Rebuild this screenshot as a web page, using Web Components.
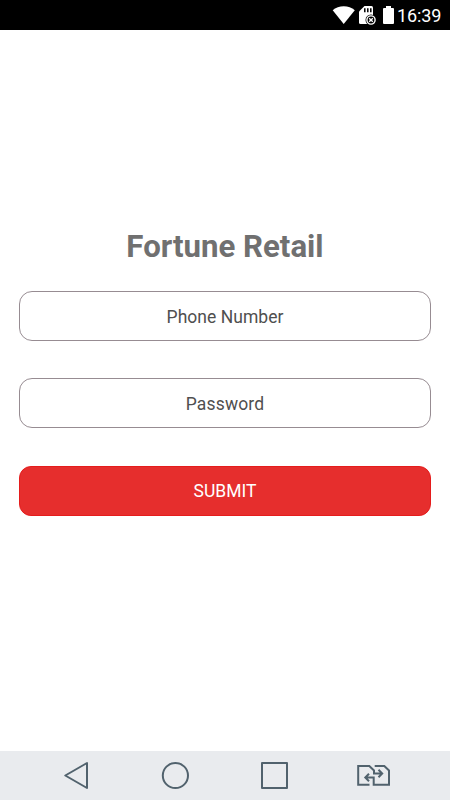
<!DOCTYPE html>
<html lang="en">
<head>
<meta charset="utf-8">
<title>Fortune Retail</title>
<style>html,body{margin:0;height:100%;background:#fff;overflow:hidden}</style>
</head>
<body>
<login-screen></login-screen>
<script>
const define = (name, html) => customElements.define(name, class extends HTMLElement {
  constructor() {
    super();
    const t = document.createElement('template');
    t.innerHTML = html;
    this.attachShadow({ mode: 'open' }).append(t.content.cloneNode(true));
  }
});

define('status-bar', `
<style>
:host{display:flex;box-sizing:border-box;height:30px;background:#000;color:#fff;justify-content:flex-end;padding-right:9px}
svg{display:block;flex:none}
.time{font-size:18px;line-height:31px;letter-spacing:-.1px;width:44px;white-space:nowrap}
</style>
<svg width="65" height="30" viewBox="332 0 65 30">
  <path fill="#fff" d="M332.7 10.3C338.5 5 349 5 354.8 10.3L343.7 24Z"/>
  <path fill="#fff" d="M364.5 6H371.5Q373 6 373 7.5V24H360.5Q359 24 359 22.5V11.5Z"/>
  <path stroke="#000" stroke-width="1.5" d="M364.8 8.2V12.2M367.8 8.2V12.2M370.8 8.2V12.2"/>
  <circle cx="371" cy="20" r="5.5" fill="#000"/>
  <circle cx="371" cy="20" r="4.1" fill="none" stroke="#fff" stroke-width="1.4"/>
  <path stroke="#fff" stroke-width="1.4" d="M369.2 18.2L372.8 21.8M372.8 18.2L369.2 21.8"/>
  <path fill="#fff" d="M386 6H391V8H393Q394 8 394 9V23Q394 24 393 24H384Q383 24 383 23V9Q383 8 384 8H386Z"/>
</svg>
<span class="time">16:39</span>`);

define('app-title', `
<style>
:host{display:block;text-align:center;font-size:31.2px;font-weight:700;line-height:36px;color:#707070}
</style><slot></slot>`);

define('text-field', `
<style>
:host{display:block;box-sizing:border-box;height:50px;border:1.4px solid #978c92;border-radius:13px;text-align:center;font-size:17.5px;line-height:var(--line,48px);color:#4f4f4f;letter-spacing:var(--track,.03px)}
</style><slot></slot>`);

define('submit-button', `
<style>
:host{display:block;box-sizing:border-box;height:50px;border:1px solid #e51c1c;border-radius:12px;background:#e62e2d;text-align:center;font-size:17.5px;line-height:48px;color:#fff}
</style><slot></slot>`);

define('nav-bar', `
<style>
:host{display:block;height:49px;background:#e9ebee}
svg{display:block}
</style>
<svg width="450" height="49" viewBox="0 751 450 49" fill="none" stroke="#51626d" stroke-width="2">
  <path stroke-linejoin="round" d="M87 763V788L65.3 775.5Z"/>
  <circle cx="175.4" cy="775.5" r="12.6"/>
  <rect x="262" y="763" width="25" height="25" stroke-linejoin="round"/>
  <path d="M369.5 784.7H358.2V766H369.3L374 770.4V773.5H382M378.5 769.7L382.2 773.5L378.5 777.3"/>
  <path d="M374.7 766H384.3L389 770.4V784.7H373.7V777.5H365.5M369 773.7L365.3 777.5L369 781.3"/>
</svg>`);

define('login-screen', `
<style>
:host{display:flex;flex-direction:column;width:450px;height:800px;background:#fff;font-family:Roboto,sans-serif}
main{flex:1;display:flex;flex-direction:column;padding:199px 19px 0}
app-title{margin-bottom:26px}
.phone{margin-bottom:37px;--line:50px}
.password{margin-bottom:38px;--line:50px;--track:.15px}
</style>
<status-bar></status-bar>
<main>
  <app-title>Fortune Retail</app-title>
  <text-field class="phone">Phone Number</text-field>
  <text-field class="password">Password</text-field>
  <submit-button>SUBMIT</submit-button>
</main>
<nav-bar></nav-bar>`);
</script>
</body>
</html>
